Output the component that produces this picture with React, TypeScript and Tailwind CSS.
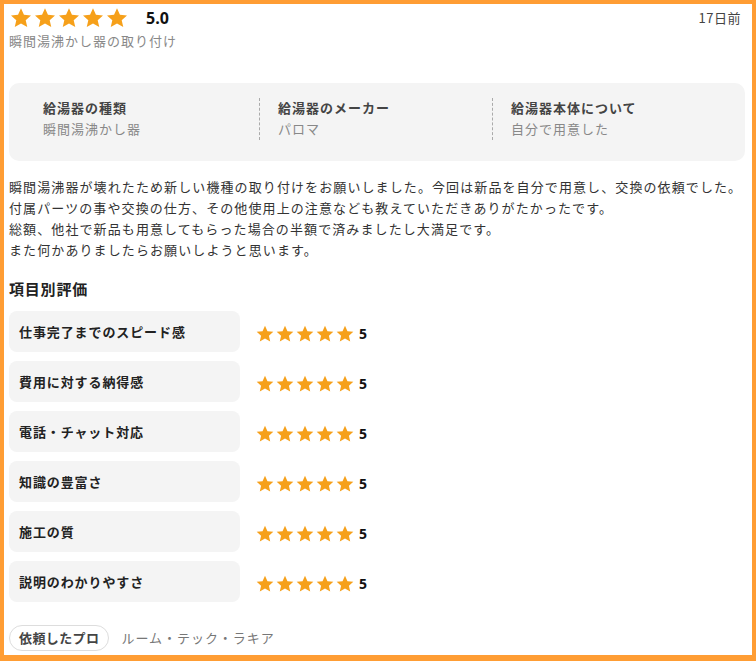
const STAR = 'M12 2.2l2.95 6.5 7.05.7-5.3 4.75 1.55 6.95L12 17.5l-6.25 3.6 1.55-6.95L2 9.4l7.05-.7z';

const Stars = ({ size }: { size: number }) => (
  <div className="flex">
    {[...Array(5)].map((_, i) => (
      <svg key={i} width={size} height={size} viewBox="0 0 24 24">
        <path d={STAR} fill="#f6a01a" />
      </svg>
    ))}
  </div>
);

const details = [
  { label: '給湯器の種類', value: '瞬間湯沸かし器' },
  { label: '給湯器のメーカー', value: 'パロマ' },
  { label: '給湯器本体について', value: '自分で用意した' },
];

const ratings = [
  '仕事完了までのスピード感',
  '費用に対する納得感',
  '電話・チャット対応',
  '知識の豊富さ',
  '施工の質',
  '説明のわかりやすさ',
];

const comment = [
  '瞬間湯沸器が壊れたため新しい機種の取り付けをお願いしました。今回は新品を自分で用意し、交換の依頼でした。',
  '付属パーツの事や交換の仕方、その他使用上の注意なども教えていただきありがたかったです。',
  '総額、他社で新品も用意してもらった場合の半額で済みましたし大満足です。',
  'また何かありましたらお願いしようと思います。',
];

const jp = { fontFamily: '"Noto Sans CJK JP", "Noto Sans", sans-serif' };
const num = { fontFamily: '"Open Sans", sans-serif' };

export default function App() {
  return (
    <div
      className="w-[756px] h-[661px] overflow-hidden border-[#ff9d34] border-t-4 border-x-4 border-b-[6px] bg-white pl-[5px] pr-[7px] text-[#333]"
      style={jp}
    >
      {/* Header */}
      <div className="flex items-start justify-between">
        <div>
          <div className="flex items-center h-[28px]">
            <Stars size={24} />
            <span className="ml-[17px] text-[16px] font-bold text-[#111]" style={num}>
              5.0
            </span>
          </div>
          <p className="text-[13px] leading-[18px] tracking-[1px] text-[#888]">瞬間湯沸かし器の取り付け</p>
        </div>
        <span className="mt-[4px] mr-[4px] text-[13px] tracking-[0.5px] text-[#444]">17日前</span>
      </div>

      {/* Details box */}
      <div className="mt-[33px] grid grid-cols-3 items-start h-[78px] rounded-[10px] bg-[#f4f4f4] pt-[15px] pl-[17px] pr-[20px]">
        {details.map((d, i) => (
          <div
            key={i}
            className={`h-[42px] ${i > 0 ? 'border-l border-dashed border-[#aaa] pl-[18px]' : 'pl-[17px]'}`}
          >
            <p className="text-[13px] leading-[20px] tracking-[1px] font-bold text-[#444]">{d.label}</p>
            <p className="text-[13px] leading-[22px] tracking-[1px] text-[#888]">{d.value}</p>
          </div>
        ))}
      </div>

      {/* Comment */}
      <div className="mt-[15px] text-[13px] leading-[21px] tracking-[1.1px] text-[#333]">
        {comment.map((line, i) => (
          <p key={i} className="whitespace-nowrap">{line}</p>
        ))}
      </div>

      {/* Ratings */}
      <h3 className="mt-[18px] text-[15px] leading-[22px] tracking-[0.8px] font-bold text-[#222]">項目別評価</h3>
      <div className="mt-[11px] flex flex-col gap-[9px]">
        {ratings.map((r, i) => (
          <div key={i} className="flex items-center">
            <div className="w-[231px] h-[41px] flex items-center rounded-[8px] bg-[#f4f4f4] px-[10px]">
              <span className="text-[13px] tracking-[0.9px] font-bold text-[#222]">{r}</span>
            </div>
            <div className="ml-[15px] mt-[4px] flex items-center">
              <Stars size={20} />
              <span className="ml-[4px] text-[14px] font-bold text-[#111]" style={num}>
                5
              </span>
            </div>
          </div>
        ))}
      </div>

      {/* Footer */}
      <div className="mt-[23px] flex items-center">
        <span className="h-[26px] flex items-center rounded-full border border-[#ddd] px-[9px] text-[13px] tracking-[0.4px] font-bold text-[#444]">
          依頼したプロ
        </span>
        <span className="ml-[12px] text-[13px] tracking-[1px] text-[#777]">ルーム・テック・ラキア</span>
      </div>
    </div>
  );
}
